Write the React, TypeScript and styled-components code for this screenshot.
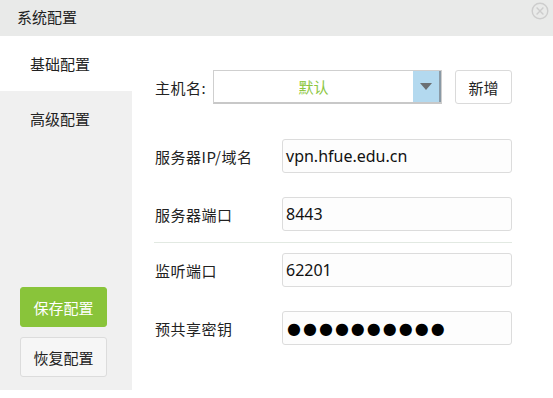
import React from "react";
import styled, { createGlobalStyle } from "styled-components";

const Global = createGlobalStyle`
  html, body { margin: 0; padding: 0; background: #fff; }
  body { font-family: "Noto Sans", "Noto Sans CJK SC", sans-serif; color: #222; }
  * { box-sizing: border-box; }
`;

const Dialog = styled.div`
  width: 553px;
  height: 398px;
  display: flex;
  flex-direction: column;
  background: #fff;
`;

const Header = styled.div`
  height: 36px;
  flex: none;
  background: #e9eae9;
  display: flex;
  align-items: center;
  justify-content: space-between;
  padding: 0 4px 0 17px;
  font-size: 15px;
  color: #222;
`;

const Title = styled.span`
  margin-top: -4px;
  font-family: "Noto Sans CJK SC", sans-serif;
`;

const CloseBtn = styled.div`
  align-self: flex-start;
  margin-top: 2px;
  width: 18px;
  height: 18px;
`;

const Body = styled.div`
  flex: 1;
  display: flex;
  padding-bottom: 8px;
`;

const Sidebar = styled.div`
  width: 132px;
  flex: none;
  background: #f0f0f0;
  display: flex;
  flex-direction: column;
`;

const Tab = styled.div<{ $active?: boolean }>`
  height: 55px;
  display: flex;
  align-items: center;
  padding-left: 30px;
  font-size: 15px;
  font-family: "Noto Sans CJK SC", sans-serif;
  background: ${(p) => (p.$active ? "#fff" : "transparent")};
  color: #222;
`;

const SideActions = styled.div`
  margin-top: auto;
  display: flex;
  flex-direction: column;
  gap: 10px;
  padding: 0 0 13px 20px;
`;

const SideButton = styled.div<{ $primary?: boolean }>`
  width: 87px;
  height: 40px;
  border-radius: 3px;
  display: flex;
  align-items: center;
  justify-content: center;
  font-size: 15px;
  font-family: "Noto Sans CJK SC", sans-serif;
  background: ${(p) => (p.$primary ? "#89c43a" : "#f6f6f6")};
  color: ${(p) => (p.$primary ? "#fff" : "#222")};
  border: 1px solid ${(p) => (p.$primary ? "#89c43a" : "#dcdcdc")};
`;

const Main = styled.div`
  flex: 1;
  padding: 34px 41px 0 23px;
  display: flex;
  flex-direction: column;
`;

const HostRow = styled.div`
  display: flex;
  align-items: center;
  height: 34px;
  margin-bottom: 35px;
`;

const Label = styled.div<{ $width?: number }>`
  width: ${(p) => p.$width ?? 127}px;
  flex: none;
  font-size: 15px;
  letter-spacing: 0.5px;
  font-family: "Noto Sans CJK SC", sans-serif;
  color: #222;
`;

const Select = styled.div`
  width: 229px;
  height: 34px;
  display: flex;
  border: 1px solid #cfcfcf;
  border-bottom: 2px solid #c8c8c8;
`;

const SelectValue = styled.div`
  flex: 1;
  display: flex;
  align-items: center;
  justify-content: center;
  font-size: 15px;
  font-family: "Noto Sans CJK SC", sans-serif;
  color: #8cc63f;
`;

const SelectArrow = styled.div`
  width: 28px;
  background: #b3d9ef;
  border-right: 2px solid #8a9aa6;
  display: flex;
  align-items: center;
  justify-content: center;
`;

const AddButton = styled.div`
  margin-left: 13px;
  width: 57px;
  height: 34px;
  border: 1px solid #dadada;
  border-radius: 3px;
  display: flex;
  align-items: center;
  justify-content: center;
  font-size: 15px;
  font-family: "Noto Sans CJK SC", sans-serif;
  color: #222;
`;

const FieldRow = styled.div<{ $gap?: number }>`
  display: flex;
  align-items: center;
  margin-bottom: ${(p) => p.$gap ?? 24}px;
`;

const Input = styled.div`
  width: 230px;
  height: 34px;
  border: 1px solid #dcdcdc;
  border-radius: 3px;
  background: #fdfdfd;
  display: flex;
  align-items: center;
  padding-left: 3px;
  font-size: 16px;
  color: #111;
  font-family: "Noto Sans", sans-serif;
`;

const Dots = styled.span`
  font-family: "DejaVu Sans", sans-serif;
  font-size: 16px;
  letter-spacing: 2px;
  margin-left: 1px;
  color: #000;
`;

const Divider = styled.div`
  height: 1px;
  background: #e2e9e2;
  margin: -13px 0 10px -1px;
  width: 358px;
`;

export default function App() {
  return (
    <>
      <Global />
      <Dialog>
        <Header>
          <Title>系统配置</Title>
          <CloseBtn>
            <svg width="18" height="18" viewBox="0 0 18 18">
              <circle cx="9" cy="9" r="7.8" fill="none" stroke="#cdcdcd" strokeWidth="1.4" />
              <path d="M5.6 5.6 L12.4 12.4 M12.4 5.6 L5.6 12.4" stroke="#cdcdcd" strokeWidth="1.4" />
            </svg>
          </CloseBtn>
        </Header>
        <Body>
          <Sidebar>
            <Tab $active>基础配置</Tab>
            <Tab>高级配置</Tab>
            <SideActions>
              <SideButton $primary>保存配置</SideButton>
              <SideButton>恢复配置</SideButton>
            </SideActions>
          </Sidebar>
          <Main>
            <HostRow>
              <Label $width={58}>主机名:</Label>
              <Select>
                <SelectValue>默认</SelectValue>
                <SelectArrow>
                  <svg width="12" height="7" viewBox="0 0 12 7">
                    <path d="M0 0 H12 L6 7 Z" fill="#6b6f72" />
                  </svg>
                </SelectArrow>
              </Select>
              <AddButton>新增</AddButton>
            </HostRow>
            <FieldRow>
              <Label>服务器IP/域名</Label>
              <Input>vpn.hfue.edu.cn</Input>
            </FieldRow>
            <FieldRow>
              <Label>服务器端口</Label>
              <Input>8443</Input>
            </FieldRow>
            <Divider />
            <FieldRow>
              <Label>监听端口</Label>
              <Input>62201</Input>
            </FieldRow>
            <FieldRow>
              <Label>预共享密钥</Label>
              <Input>
                <Dots>●●●●●●●●●●</Dots>
              </Input>
            </FieldRow>
          </Main>
        </Body>
      </Dialog>
    </>
  );
}
